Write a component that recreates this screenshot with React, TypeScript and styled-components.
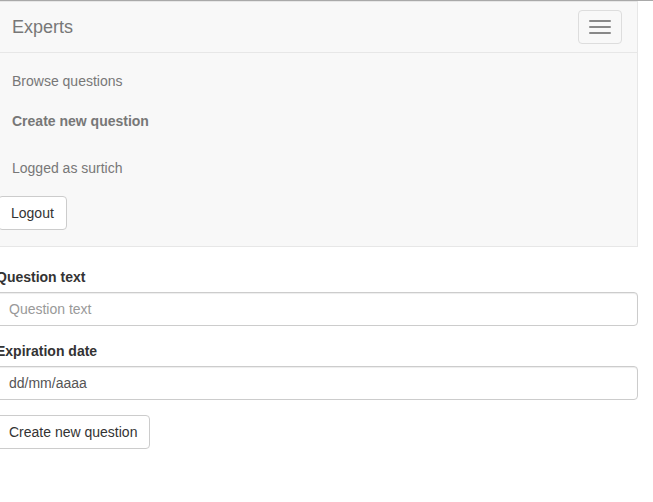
import React from "react";
import styled, { createGlobalStyle } from "styled-components";

const Global = createGlobalStyle`
  html, body { margin: 0; padding: 0; background: #fff; }
  body {
    font-family: "Liberation Sans", Arial, Helvetica, sans-serif;
    font-size: 14px;
    line-height: 20px;
    color: #333;
    overflow: hidden;
  }
  * { box-sizing: border-box; }
`;

const Shell = styled.div`
  border-top: 1px solid #a9a9a9;
  width: 653px;
`;

const Page = styled.div`
  margin-left: -4px;
  width: 642px;
`;

const Navbar = styled.nav`
  background: #f8f8f8;
  border: 1px solid #e7e7e7;
  margin-bottom: 20px;
`;

const Header = styled.div`
  display: flex;
  justify-content: space-between;
  align-items: flex-start;
  height: 50px;
`;

const Brand = styled.a`
  display: block;
  height: 50px;
  padding: 15px;
  font-size: 18px;
  line-height: 20px;
  color: #777;
  text-decoration: none;
`;

const Toggle = styled.button`
  display: flex;
  flex-direction: column;
  gap: 4px;
  margin: 8px 15px 8px 0;
  padding: 9px 10px;
  width: 44px;
  height: 34px;
  background: transparent;
  border: 1px solid #ddd;
  border-radius: 4px;
`;

const Bar = styled.span`
  display: block;
  width: 22px;
  height: 2px;
  border-radius: 1px;
  background: #888;
`;

const Collapse = styled.div`
  border-top: 1px solid #e7e7e7;
  padding-bottom: 16px;
`;

const NavList = styled.ul`
  list-style: none;
  margin: 8px 0 0;
  padding: 0;
`;

const NavLink = styled.a<{ $bold?: boolean }>`
  display: block;
  padding: 10px 15px;
  color: #777;
  font-weight: ${(p) => (p.$bold ? "bold" : "normal")};
  text-decoration: none;
`;

const NavText = styled.p`
  margin: 17px 15px 0;
  color: #777;
`;

const NavForm = styled.div`
  margin-top: 18px;
  padding-left: 1px;
`;

const Button = styled.button`
  display: inline-block;
  height: 34px;
  padding: 6px 12px;
  font-family: inherit;
  font-size: 14px;
  line-height: 20px;
  color: #333;
  background: #fff;
  border: 1px solid #ccc;
  border-radius: 4px;
`;

const Form = styled.form`
  display: flex;
  flex-direction: column;
`;

const Group = styled.div`
  margin-bottom: 15px;
`;

const Label = styled.label`
  display: block;
  margin-bottom: 5px;
  font-weight: bold;
  color: #333;
`;

const Input = styled.input`
  display: block;
  width: 100%;
  height: 34px;
  padding: 6px 12px;
  font-family: inherit;
  font-size: 14px;
  line-height: 20px;
  color: #555;
  background: #fff;
  border: 1px solid #ccc;
  border-radius: 4px;
  box-shadow: inset 0 1px 1px rgba(0, 0, 0, 0.075);
  &::placeholder { color: #999; }
`;

const Actions = styled.div``;

export default function App() {
  return (
    <>
      <Global />
      <Shell>
        <Page>
          <Navbar>
            <Header>
              <Brand>Experts</Brand>
              <Toggle type="button" aria-label="Toggle navigation">
                <Bar />
                <Bar />
                <Bar />
              </Toggle>
            </Header>
            <Collapse>
              <NavList>
                <li>
                  <NavLink>Browse questions</NavLink>
                </li>
                <li>
                  <NavLink $bold>Create new question</NavLink>
                </li>
              </NavList>
              <NavText>Logged as surtich</NavText>
              <NavForm>
                <Button type="button">Logout</Button>
              </NavForm>
            </Collapse>
          </Navbar>
          <Form onSubmit={(e) => e.preventDefault()}>
            <Group>
              <Label>Question text</Label>
              <Input type="text" placeholder="Question text" />
            </Group>
            <Group>
              <Label>Expiration date</Label>
              <Input type="text" defaultValue="dd/mm/aaaa" />
            </Group>
            <Actions>
              <Button type="submit">Create new question</Button>
            </Actions>
          </Form>
        </Page>
      </Shell>
    </>
  );
}
